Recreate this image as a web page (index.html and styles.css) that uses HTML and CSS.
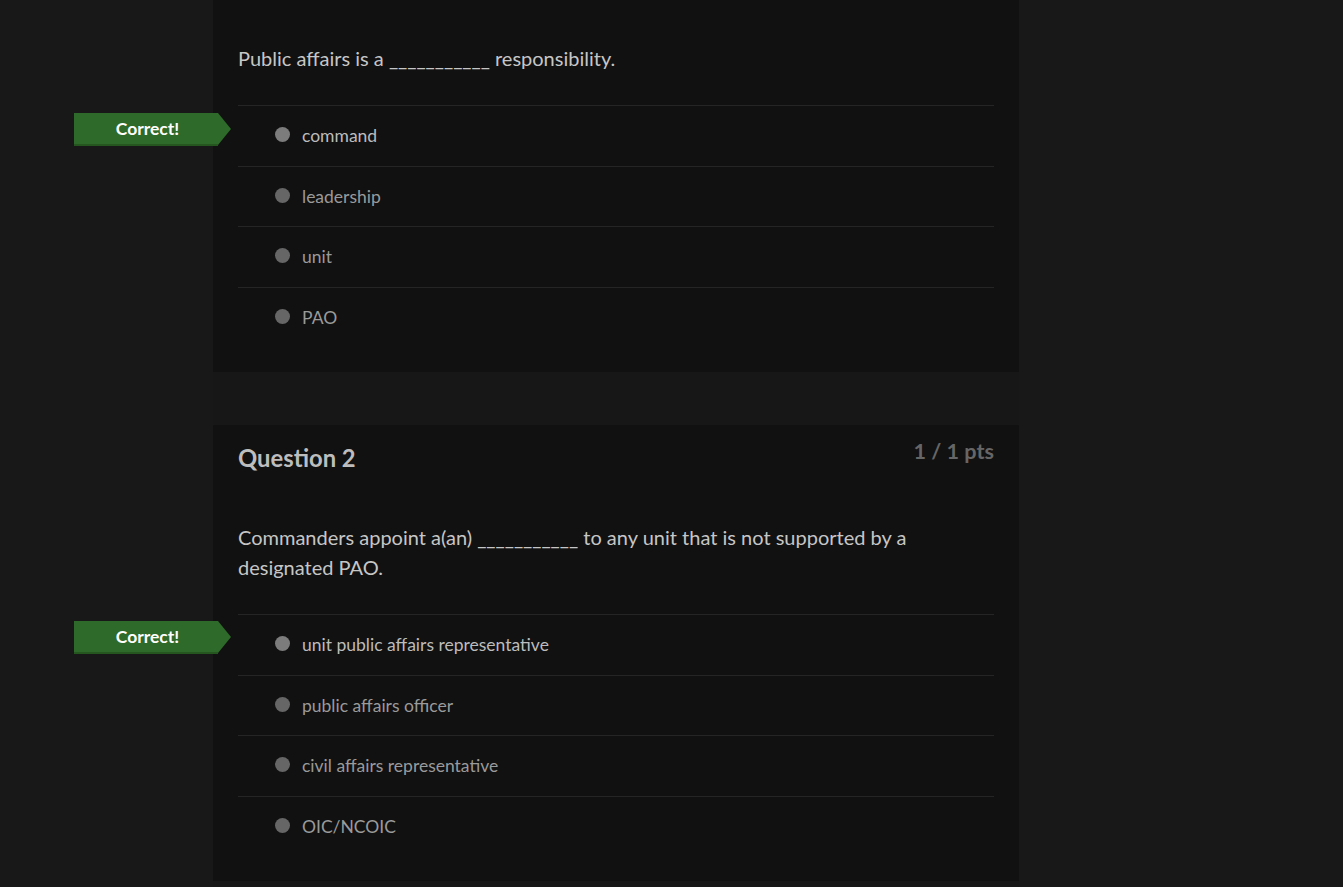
FILE: index.html
```html
<!DOCTYPE html>
<html lang="en">
<head>
<meta charset="utf-8">
<title>Quiz results</title>
<link rel="stylesheet" href="styles.css">
</head>
<body>
<main class="column">
  <section class="card card-first">
    <div class="question-text">Public affairs is a ___________ responsibility.</div>
    <div class="answers">
      <div class="answer answer-correct">
        <div class="badge">Correct!</div>
        <span class="radio"></span><span class="label">command</span>
      </div>
      <div class="answer"><span class="radio"></span><span class="label">leadership</span></div>
      <div class="answer"><span class="radio"></span><span class="label">unit</span></div>
      <div class="answer"><span class="radio"></span><span class="label">PAO</span></div>
    </div>
  </section>
  <section class="card">
    <header class="card-header">
      <h2 class="q-title">Question 2</h2>
      <div class="pts">1 / 1 pts</div>
    </header>
    <div class="question-text q-spaced">Commanders appoint a(an) ___________ to any unit that is not supported by a designated PAO.</div>
    <div class="answers">
      <div class="answer answer-correct">
        <div class="badge badge-low">Correct!</div>
        <span class="radio"></span><span class="label">unit public affairs representative</span>
      </div>
      <div class="answer"><span class="radio"></span><span class="label">public affairs officer</span></div>
      <div class="answer"><span class="radio"></span><span class="label">civil affairs representative</span></div>
      <div class="answer"><span class="radio"></span><span class="label">OIC/NCOIC</span></div>
    </div>
  </section>
</main>
</body>
</html>
```

FILE: styles.css
```css
html, body {
  margin: 0;
  padding: 0;
  background: #181818;
  font-family: Lato, "Open Sans", "Liberation Sans", sans-serif;
}

.column {
  margin-left: 213px;
  width: 806px;
  background: #171717;
  display: flex;
  flex-direction: column;
  gap: 53px;
  padding-bottom: 20px;
}

.card {
  background: #111111;
  padding: 0 25px 25px;
}

.card-first {
  padding-top: 43px;
}

.card-header {
  display: flex;
  justify-content: space-between;
  align-items: flex-start;
  padding-top: 18px;
}

.q-title {
  margin: 0;
  font-size: 23.8px;
  line-height: 30px;
  font-weight: 700;
  color: #bdbdbd;
}

.pts {
  font-size: 21.6px;
  line-height: 16px;
  padding-top: 0;
  font-weight: 700;
  color: #666666;
}

.question-text {
  font-size: 20px;
  line-height: 30px;
  color: #c6c6c6;
  padding-bottom: 32px;
}

.q-spaced {
  margin-top: 49px;
}

.answers {
  display: flex;
  flex-direction: column;
}

.answer {
  position: relative;
  display: flex;
  align-items: center;
  min-height: 60.5px;
  box-sizing: border-box;
  border-top: 1px solid #252525;
  padding-left: 37px;
  padding-top: 1px;
  gap: 12px;
  font-size: 17.5px;
  color: #9a9a9a;
}

.answer-correct {
  color: #bcbcbc;
}

.radio {
  width: 15px;
  height: 15px;
  border-radius: 50%;
  background: #666666;
  margin-top: -3px;
  flex-shrink: 0;
}

.answer-correct .radio {
  background: #7c7c7c;
}

.label {
  line-height: 22px;
}

.badge {
  position: absolute;
  left: -164px;
  top: 7px;
  width: 144px;
  height: 33px;
  background: #2e6a29;
  color: #ffffff;
  font-size: 17.5px;
  font-weight: 700;
  line-height: 31px;
  text-align: center;
  box-sizing: border-box;
  padding-left: 3px;
  border-bottom: 2px solid #26561f;
}

.badge-low {
  top: 6px;
}

.badge::after {
  content: "";
  position: absolute;
  left: 144px;
  top: 0;
  width: 0;
  height: 0;
  border-top: 16.5px solid transparent;
  border-bottom: 16.5px solid transparent;
  border-left: 13px solid #2e6a29;
}
```
